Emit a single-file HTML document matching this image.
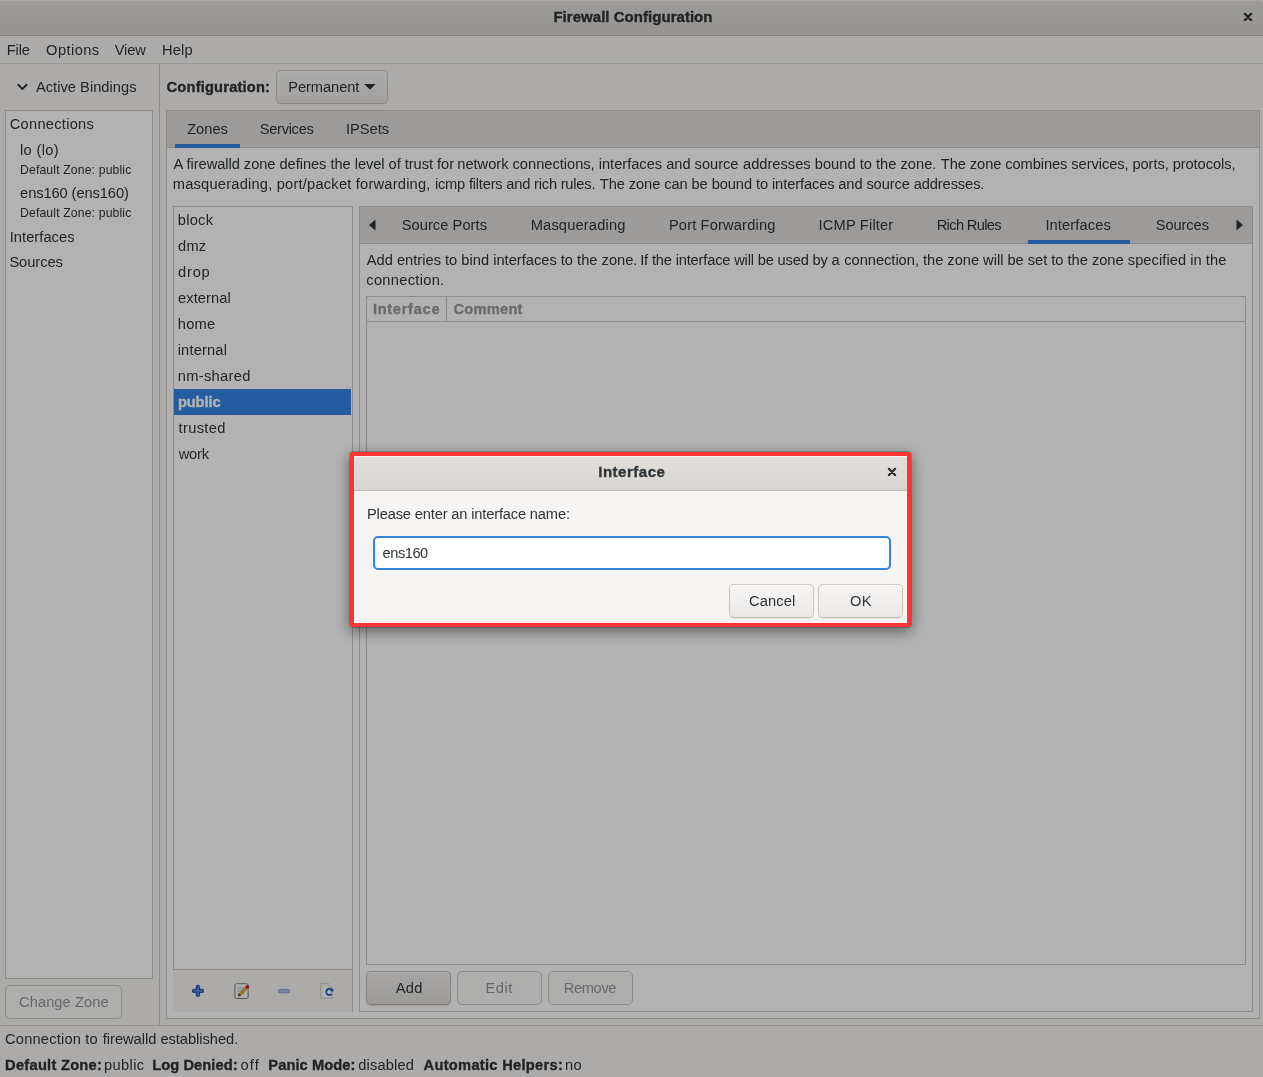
<!DOCTYPE html>
<html>
<head>
<meta charset="utf-8">
<title>Firewall Configuration</title>
<style>
*{box-sizing:border-box;margin:0;padding:0}
html,body{width:1263px;height:1077px;overflow:hidden}
body{position:relative;background:#f6f5f4;font-family:"Liberation Sans",sans-serif;font-size:14.67px;color:#2e3436;line-height:1}
.a{position:absolute}
.t{position:absolute;white-space:pre;line-height:20px;height:20px}
.lay{left:0;top:0;width:1263px;height:1077px;will-change:transform}
.b{font-weight:bold;-webkit-text-stroke:0.35px}
.sm{font-size:12.2px}
/* title bar */
#titlebar{left:0;top:0;width:1263px;height:36px;background:linear-gradient(to bottom,#e2dfdc,#d7d3cf);border-bottom:1px solid #bfb8b1;border-radius:3px 3px 0 0;box-shadow:inset 0 1px rgba(255,255,255,0.5)}
#menubar{left:0;top:36px;width:1263px;height:28px;border-bottom:1px solid #dcdbda}
/* generic bordered boxes */
.box{border:1px solid #cdc7c2;background:#fff}
.btn{border:1px solid #cdc7c2;border-bottom-color:#bfb8b1;border-radius:5px;background:linear-gradient(to bottom,#f7f6f5,#eae8e5);box-shadow:inset 0 1px rgba(255,255,255,0.8),0 1px 2px rgba(0,0,0,0.07)}
.btn.hot{background:linear-gradient(to bottom,#f1efed,#e1deda);border-color:#c4bdb7;border-bottom-color:#b6aea6;box-shadow:inset 0 1px rgba(255,255,255,0.5),0 1px 2px rgba(0,0,0,0.12)}
.btn.dis{background:#faf9f8;border-color:#cdc7c2;box-shadow:none;color:#929595}
.nbhead{background:#e1dedb;border-bottom:1px solid #cdc7c2}
.ul{background:#3584e4;height:3px}
#overlay{left:0;top:0;width:1263px;height:1077px;background:rgba(0,0,0,0.30)}
</style>
</head>
<body>
<!-- ===== main window ===== -->
<div class="a" id="titlebar"></div>
<svg class="a" style="left:1243px;top:12px" width="10" height="11" viewBox="0 0 10 11"><path d="M1.9 2.9 L8.1 9.1 M8.1 2.9 L1.9 9.1" stroke="#fff" stroke-opacity="0.5" stroke-width="2" stroke-linecap="round"/><path d="M1.9 1.9 L8.1 8.1 M8.1 1.9 L1.9 8.1" stroke="#2e3436" stroke-width="2.3" stroke-linecap="round"/></svg>

<div class="a" id="menubar"></div>

<!-- paned handle + bottom separator -->
<div class="a" style="left:159px;top:64px;width:1px;height:961px;background:#cdc7c2"></div>
<div class="a" style="left:0;top:1025px;width:1263px;height:1px;background:#d5d0cc"></div>

<!-- ===== sidebar ===== -->
<svg class="a" style="left:16px;top:81px" width="13" height="12" viewBox="0 0 13 12"><path d="M1.7 3.2 L6.4 7.9 L11.1 3.2" fill="none" stroke="#2e3436" stroke-width="2"/></svg>
<div class="a box" style="left:5px;top:110px;width:148px;height:869px"></div>
<div class="a btn dis" style="left:5px;top:985px;width:117px;height:34px"></div>

<!-- ===== main area ===== -->
<div class="a btn" style="left:276px;top:70px;width:112px;height:34px"></div>
<svg class="a" style="left:364px;top:84px" width="12" height="6" viewBox="0 0 12 6"><path d="M0.2 0.1 H11.8 L6 5.8 Z" fill="#2e3436"/></svg>

<!-- outer notebook -->
<div class="a box" style="left:166px;top:110px;width:1094px;height:909px"></div>
<div class="a nbhead" style="left:167px;top:111px;width:1092px;height:37px"></div>
<div class="a ul" style="left:175px;top:144px;width:65px;height:4px"></div>

<!-- zone list -->
<div class="a box" style="left:173px;top:206px;width:180px;height:764px"></div>
<div class="a" style="left:174px;top:389px;width:177px;height:26px;background:#3584e4"></div>
<!-- inline toolbar -->
<div class="a" id="tb" style="left:173px;top:970px;width:180px;height:42px;background:#f6f5f4;border-right:1px solid #cdc7c2"></div>
<!-- toolbar icons -->
<svg class="a" style="left:190px;top:983px" width="16" height="16" viewBox="0 0 16 16"><path d="M4 7.9 H11.8 M7.9 4 V11.8" stroke="#2a5db0" stroke-width="4.4" stroke-linecap="round" fill="none"/><path d="M4 7.9 H11.8 M7.9 4 V11.8" stroke="#568bd8" stroke-width="1.7" stroke-linecap="round" fill="none"/></svg>
<svg class="a" style="left:233.5px;top:983px" width="16" height="16" viewBox="0 0 16 16"><rect x="0.9" y="0.7" width="13.2" height="14.8" rx="1.5" fill="#f8f8f7" stroke="#7b7d7a" stroke-width="1"/><path d="M3.5 4.5 H10 M3.5 6.5 H10.5 M3.5 8.5 H9 M3.5 11 H10.5" stroke="#c4c4c2" stroke-width="0.9"/><path d="M4.8 12.5 L13 4.3" stroke="#a86a18" stroke-width="3.0" stroke-linecap="butt"/><path d="M5 12.3 L13 4.3" stroke="#eeae3a" stroke-width="1.8" stroke-linecap="butt"/><path d="M3.9 13.5 L4.6 10.7 L6.7 12.8 Z" fill="#4a3a22"/><circle cx="13.4" cy="3.9" r="1.8" fill="#d81f28"/></svg>
<svg class="a" style="left:276px;top:983px" width="16" height="16" viewBox="0 0 16 16"><rect x="2.4" y="6.3" width="11.3" height="3.5" rx="1.75" fill="#aabde4" stroke="#8098d0" stroke-width="0.9"/></svg>
<svg class="a" style="left:318.5px;top:983px" width="16" height="16" viewBox="0 0 16 16"><path d="M1.9 0.8 H9.9 L12.9 3.8 V15.2 H1.9 Z" fill="#fdfdfd" stroke="#c4c4c1" stroke-width="1"/><path d="M9.9 0.8 V3.8 H12.9" fill="#fff" stroke="#c9c9c6" stroke-width="0.8"/><path d="M12.77 10.89 A3.1 3.1 0 1 1 12.59 6.71" fill="none" stroke="#2b63bf" stroke-width="1.9"/><path d="M13.9 4.9 L10.9 8.2 L14.6 8.6 Z" fill="#2b63bf"/></svg>

<!-- inner notebook -->
<div class="a box" style="left:359px;top:206px;width:894px;height:806px"></div>
<div class="a nbhead" style="left:360px;top:207px;width:892px;height:37px"></div>
<div class="a ul" style="left:1028px;top:240px;width:102px;height:4px"></div>
<svg class="a" style="left:368px;top:219px" width="8" height="12" viewBox="0 0 8 12"><path d="M7.5 0.5 V11.5 L1 6 Z" fill="#2e3436"/></svg>
<svg class="a" style="left:1236px;top:219px" width="8" height="12" viewBox="0 0 8 12"><path d="M0.5 0.5 V11.5 L7 6 Z" fill="#2e3436"/></svg>
<!-- tree view -->
<div class="a box" style="left:366px;top:296px;width:880px;height:669px"></div>
<div class="a" style="left:367px;top:321px;width:878px;height:1px;background:#cdc7c2"></div>
<div class="a" style="left:446px;top:297px;width:1px;height:24px;background:#cdc7c2"></div>
<!-- buttons -->
<div class="a btn hot" style="left:366px;top:971px;width:85px;height:34px"></div>
<div class="a btn dis" style="left:457px;top:971px;width:85px;height:34px"></div>
<div class="a btn dis" style="left:548px;top:971px;width:85px;height:34px"></div>

<!-- status -->


<!-- main text layer -->
<div class="a lay">
<div class="t b" id="title" style="left:553.4px;letter-spacing:0.036px;top:7px;font-size:15px">Firewall Configuration</div>
<div class="t" id="m1" style="left:6.8px;letter-spacing:-0.172px;top:40px">File</div>
<div class="t" id="m2" style="left:46.1px;letter-spacing:0.416px;top:40px">Options</div>
<div class="t" id="m3" style="left:114.7px;letter-spacing:-0.104px;top:40px">View</div>
<div class="t" id="m4" style="left:162.0px;letter-spacing:0.173px;top:40px">Help</div>
<div class="t" id="ab" style="left:35.9px;letter-spacing:0.031px;top:77px">Active Bindings</div>
<div class="t" id="s1" style="left:9.7px;letter-spacing:0.270px;top:114px">Connections</div>
<div class="t" id="s2" style="left:20.0px;letter-spacing:0.349px;top:140px">lo (lo)</div>
<div class="t sm" id="s3" style="left:20.0px;letter-spacing:0.153px;top:160px">Default Zone: public</div>
<div class="t" id="s4" style="left:20.1px;letter-spacing:-0.090px;top:183px">ens160 (ens160)</div>
<div class="t sm" id="s5" style="left:20.0px;letter-spacing:0.153px;top:203px">Default Zone: public</div>
<div class="t" id="s6" style="left:9.7px;letter-spacing:0.055px;top:226.5px">Interfaces</div>
<div class="t" id="s7" style="left:9.4px;letter-spacing:-0.050px;top:252.3px">Sources</div>
<div class="t" id="cz" style="left:19.0px;letter-spacing:0.084px;top:992px;color:#929595">Change Zone</div>
<div class="t b" id="cfg" style="left:166.6px;letter-spacing:0.189px;top:77px">Configuration:</div>
<div class="t" id="perm" style="left:288.2px;letter-spacing:-0.061px;top:77px">Permanent</div>
<div class="t" id="z1" style="left:187.2px;letter-spacing:-0.022px;top:119px">Zones</div>
<div class="t" id="z2" style="left:259.8px;letter-spacing:-0.313px;top:119px">Services</div>
<div class="t" id="z3" style="left:346.0px;letter-spacing:-0.005px;top:119px">IPSets</div>
<div class="t" id="d1a" style="left:173.6px;letter-spacing:-0.049px;top:154px">A firewalld zone defines the level of trust for </div>
<div class="t" id="d1b" style="left:457.3px;letter-spacing:-0.016px;top:154px">network connections, interfaces and source </div>
<div class="t" id="d1c" style="left:743.0px;letter-spacing:0.010px;top:154px">addresses bound to the zone. </div>
<div class="t" id="d1d" style="left:940.8px;letter-spacing:-0.079px;top:154px">The zone combines services, ports, protocols,</div>
<div class="t" id="d2a" style="left:172.8px;letter-spacing:0.208px;top:174px">masquerading, port/packet forwarding, </div>
<div class="t" id="d2b" style="left:434.9px;letter-spacing:-0.205px;top:174px">icmp filters and rich rules. </div>
<div class="t" id="d2c" style="left:599.8px;letter-spacing:-0.089px;top:174px">The zone can be bound to interfaces </div>
<div class="t" id="d2d" style="left:838.3px;letter-spacing:-0.108px;top:174px">and source addresses.</div>
<div class="t" id="l0" style="left:177.8px;letter-spacing:0.245px;top:210px">block</div>
<div class="t" id="l1" style="left:178.1px;letter-spacing:0.143px;top:236px">dmz</div>
<div class="t" id="l2" style="left:178.1px;letter-spacing:0.772px;top:262px">drop</div>
<div class="t" id="l3" style="left:178.1px;letter-spacing:0.072px;top:288px">external</div>
<div class="t" id="l4" style="left:177.7px;letter-spacing:0.298px;top:314px">home</div>
<div class="t" id="l5" style="left:177.7px;letter-spacing:0.167px;top:340px">internal</div>
<div class="t" id="l6" style="left:177.7px;letter-spacing:0.335px;top:366px">nm-shared</div>
<div class="t b" id="l7" style="left:177.9px;letter-spacing:-0.087px;top:392px;color:#fff">public</div>
<div class="t" id="l8" style="left:178.6px;letter-spacing:0.332px;top:418px">trusted</div>
<div class="t" id="l9" style="left:178.7px;letter-spacing:-0.205px;top:444px">work</div>
<div class="t" id="n1" style="left:401.7px;letter-spacing:0.055px;top:215px">Source Ports</div>
<div class="t" id="n2" style="left:530.7px;letter-spacing:0.164px;top:215px">Masquerading</div>
<div class="t" id="n3" style="left:668.9px;letter-spacing:0.156px;top:215px">Port Forwarding</div>
<div class="t" id="n4" style="left:818.6px;letter-spacing:0.161px;top:215px">ICMP Filter</div>
<div class="t" id="n5" style="left:936.7px;letter-spacing:-0.654px;top:215px">Rich Rules</div>
<div class="t" id="n6" style="left:1045.4px;letter-spacing:0.118px;top:215px">Interfaces</div>
<div class="t" id="n7" style="left:1155.7px;letter-spacing:-0.073px;top:215px">Sources</div>
<div class="t" id="e1a" style="left:366.8px;letter-spacing:0.003px;top:250px">Add entries to bind interfaces to the zone. </div>
<div class="t" id="e1b" style="left:640.2px;letter-spacing:-0.174px;top:250px">If the interface will be used by a </div>
<div class="t" id="e1c" style="left:844.2px;letter-spacing:-0.019px;top:250px">connection, the zone will be set to the zone </div>
<div class="t" id="e1d" style="left:1127.8px;letter-spacing:0.049px;top:250px">specified in the</div>
<div class="t" id="e2" style="left:366.3px;letter-spacing:0.288px;top:270px">connection.</div>
<div class="t b" id="h1" style="left:372.9px;letter-spacing:0.693px;top:299px;color:#979a9b">Interface</div>
<div class="t b" id="h2" style="left:453.5px;letter-spacing:0.225px;top:299px;color:#979a9b">Comment</div>
<div class="t" id="b1" style="left:395.7px;letter-spacing:0.303px;top:978px">Add</div>
<div class="t" id="b2" style="left:485.6px;letter-spacing:0.463px;top:978px;color:#929595">Edit</div>
<div class="t" id="b3" style="left:563.7px;letter-spacing:-0.351px;top:978px;color:#929595">Remove</div>
<div class="t" id="sta" style="left:5.1px;letter-spacing:0.184px;top:1029px">Connection to </div>
<div class="t" id="stb" style="left:102.8px;letter-spacing:-0.025px;top:1029px">firewalld established.</div>
<div class="t b" id="f1" style="left:5.1px;letter-spacing:0.260px;top:1055px">Default Zone:</div>
<div class="t" id="f2" style="left:103.9px;letter-spacing:0.395px;top:1055px">public</div>
<div class="t b" id="f3" style="left:152.3px;letter-spacing:0.057px;top:1055px">Log Denied:</div>
<div class="t" id="f4" style="left:240.5px;letter-spacing:1.109px;top:1055px">off</div>
<div class="t b" id="f5" style="left:268.3px;letter-spacing:0.086px;top:1055px">Panic Mode:</div>
<div class="t" id="f6" style="left:358.3px;letter-spacing:0.150px;top:1055px">disabled</div>
<div class="t b" id="f7" style="left:423.6px;letter-spacing:0.283px;top:1055px">Automatic Helpers:</div>
<div class="t" id="f8" style="left:564.9px;letter-spacing:0.405px;top:1055px">no</div>
</div>
<!-- dim overlay -->
<div class="a" id="overlay"></div>

<!-- ===== dialog ===== -->
<div class="a" id="dlg" style="left:350px;top:452px;width:561px;height:175px;background:#fb3535;border-radius:3px;box-shadow:0 4px 14px 1px rgba(0,0,0,0.45),0 0 0 1px rgba(0,40,40,0.22)"></div>
<div class="a" style="left:354px;top:456px;width:553px;height:167px;background:#f6f5f4;border-radius:1px;box-shadow:inset 1px 0 rgba(255,255,255,0.7),inset 0 -1px rgba(255,255,255,0.7)"></div>
<div class="a" style="left:354px;top:456px;width:553px;height:35px;background:linear-gradient(to bottom,#e1dedb,#dad6d2);border-bottom:1px solid #bfb8b1;border-radius:1px 1px 0 0;box-shadow:inset 0 1px rgba(255,255,255,0.6),inset 1px 0 rgba(255,255,255,0.4)"></div>
<svg class="a" style="left:887px;top:467px" width="10" height="11" viewBox="0 0 10 11"><path d="M1.9 2.9 L8.1 9.1 M8.1 2.9 L1.9 9.1" stroke="#fff" stroke-opacity="0.7" stroke-width="2" stroke-linecap="round"/><path d="M1.9 1.9 L8.1 8.1 M8.1 1.9 L1.9 8.1" stroke="#2e3436" stroke-width="2.3" stroke-linecap="round"/></svg>
<div class="a" style="left:373px;top:536px;width:518px;height:34px;background:#fff;border:2px solid #3584e4;border-radius:5px"></div>
<div class="a btn" style="left:729px;top:584px;width:85px;height:34px"></div>
<div class="a btn" style="left:818px;top:584px;width:85px;height:34px"></div>


<!-- dialog text layer -->
<div class="a lay">
<div class="t b" id="dt" style="left:598.2px;letter-spacing:0.528px;top:462px;font-size:15px">Interface</div>
<div class="t" id="dl" style="left:367.0px;letter-spacing:-0.160px;top:504px">Please enter an interface name:</div>
<div class="t" id="de" style="left:382.6px;letter-spacing:-0.486px;top:543px">ens160</div>
<div class="t" id="dc" style="left:749.1px;letter-spacing:0.089px;top:591px">Cancel</div>
<div class="t" id="do" style="left:850.1px;letter-spacing:0.360px;top:591px">OK</div>
</div>
</body>
</html>
